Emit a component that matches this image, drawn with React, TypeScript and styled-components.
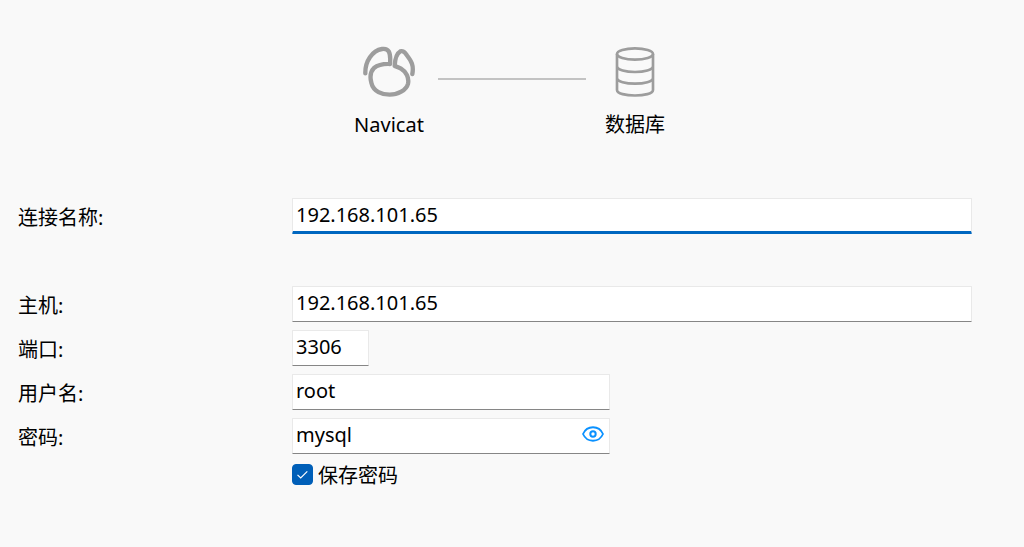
import React, { useState } from "react";
import styled, { createGlobalStyle, css } from "styled-components";

const GlobalStyle = createGlobalStyle`
  *, *::before, *::after { box-sizing: border-box; }
  body {
    margin: 0;
    background: #f9f9f9;
    color: #000;
    font-family: "Noto Sans", "Noto Sans CJK SC", sans-serif;
    font-size: 20px;
    line-height: 28px;
  }
  input, button { font: inherit; color: inherit; }
`;

const Page = styled.main`
  padding: 46px 52px 60px 18px;
`;

const Diagram = styled.header`
  display: flex;
  justify-content: center;
  margin: 0 -34px 59px 0;
`;

const Node = styled.div`
  width: 98px;
  display: flex;
  flex-direction: column;
  align-items: center;
  gap: 13px;
`;

const Link = styled.div`
  width: 148px;
  height: 2px;
  margin-top: 32px;
  background: #c3c3c3;
`;

const Form = styled.form`
  display: flex;
  flex-direction: column;
  gap: 8px;
`;

const Row = styled.div<{ $spaced?: boolean }>`
  display: grid;
  grid-template-columns: 274px 1fr;
  align-items: center;
  margin-bottom: ${(p) => (p.$spaced ? "44px" : "0")};
`;

const Label = styled.label`
  padding-top: 4px;
`;

const Field = styled.div<{ $width?: string; $active?: boolean }>`
  width: ${(p) => p.$width ?? "100%"};
  height: 36px;
  display: flex;
  align-items: flex-start;
  background: #fff;
  border: 1px solid #e9e9e9;
  border-bottom-color: #868686;
  border-radius: 1px;
  ${(p) =>
    p.$active &&
    css`
      border-bottom: 3px solid #0067c0;
    `}
`;

const TextInput = styled.input`
  flex: 1;
  min-width: 0;
  height: 30px;
  padding: 0 3px;
  border: 0;
  outline: 0;
  background: transparent;
`;

const EyeButton = styled.button`
  display: flex;
  align-items: center;
  height: 30px;
  margin-right: 5px;
  padding: 0;
  border: 0;
  background: transparent;
`;

const CheckRow = styled.label`
  display: flex;
  align-items: center;
  gap: 5px;
  margin: -4px 0 0 274px;
`;

const CheckText = styled.span`
  padding-top: 4px;
`;

const CheckBox = styled.input`
  appearance: none;
  width: 21px;
  height: 21px;
  margin: 0;
  border: 1px solid #005fb8;
  border-radius: 4px;
  background: #fff;
  &:checked {
    background: #005fb8
      url("data:image/svg+xml,%3Csvg xmlns='http://www.w3.org/2000/svg' viewBox='0 0 19 19'%3E%3Cpath d='M4.5 9.8l3.2 3.2 6.6-6.6' fill='none' stroke='white' stroke-width='1.2'/%3E%3C/svg%3E");
  }
`;

const NavicatIcon = () => (
  <svg width="54" height="52" viewBox="51 33 162 156" fill="none" stroke="#9d9d9d" strokeWidth="13" strokeLinecap="round" strokeLinejoin="round" aria-hidden="true">
    <path d="M61 115C60 78 82 47 111 42C131 39 138 51 135 87C112 86 98 90 87 99C76 110 75 128 79 143C85 170 112 179 134 179C158 179 184 166 189 146C193 128 183 110 168 101C160 96 155 95 149 93C150 72 157 54 166 49C173 46 181 53 185 60C199 78 207 91 202 117" />
  </svg>
);

const DatabaseIcon = () => (
  <svg width="40" height="52" viewBox="133 33 120 156" fill="none" stroke="#9d9d9d" strokeWidth="8" aria-hidden="true">
    <ellipse cx="193" cy="57" rx="54" ry="17" />
    <path d="M139 57V165C139 187 247 187 247 165V57M139 93C139 117 247 117 247 93M139 128C139 152 247 152 247 128" />
  </svg>
);

const EyeIcon = () => (
  <svg width="22" height="18" viewBox="0 0 22 18" fill="none" stroke="#0a91ff" strokeWidth="1.8" aria-hidden="true">
    <path d="M1 9C5 0 17 0 21 9C17 18 5 18 1 9Z" />
    <circle cx="11" cy="9" r="2.7" strokeWidth="2" />
  </svg>
);

export default function App() {
  const [saved, setSaved] = useState(true);
  return (
    <>
      <GlobalStyle />
      <Page>
        <Diagram>
          <Node>
            <NavicatIcon />
            <span>Navicat</span>
          </Node>
          <Link />
          <Node>
            <DatabaseIcon />
            <span>数据库</span>
          </Node>
        </Diagram>
        <Form>
          <Row $spaced>
            <Label htmlFor="name">连接名称:</Label>
            <Field $active>
              <TextInput id="name" defaultValue="192.168.101.65" />
            </Field>
          </Row>
          <Row>
            <Label htmlFor="host">主机:</Label>
            <Field>
              <TextInput id="host" defaultValue="192.168.101.65" />
            </Field>
          </Row>
          <Row>
            <Label htmlFor="port">端口:</Label>
            <Field $width="77px">
              <TextInput id="port" defaultValue="3306" />
            </Field>
          </Row>
          <Row>
            <Label htmlFor="user">用户名:</Label>
            <Field $width="318px">
              <TextInput id="user" defaultValue="root" />
            </Field>
          </Row>
          <Row>
            <Label htmlFor="password">密码:</Label>
            <Field $width="318px">
              <TextInput id="password" defaultValue="mysql" />
              <EyeButton type="button" aria-label="隐藏密码">
                <EyeIcon />
              </EyeButton>
            </Field>
          </Row>
          <CheckRow>
            <CheckBox type="checkbox" checked={saved} onChange={(e) => setSaved(e.target.checked)} />
            <CheckText>保存密码</CheckText>
          </CheckRow>
        </Form>
      </Page>
    </>
  );
}
